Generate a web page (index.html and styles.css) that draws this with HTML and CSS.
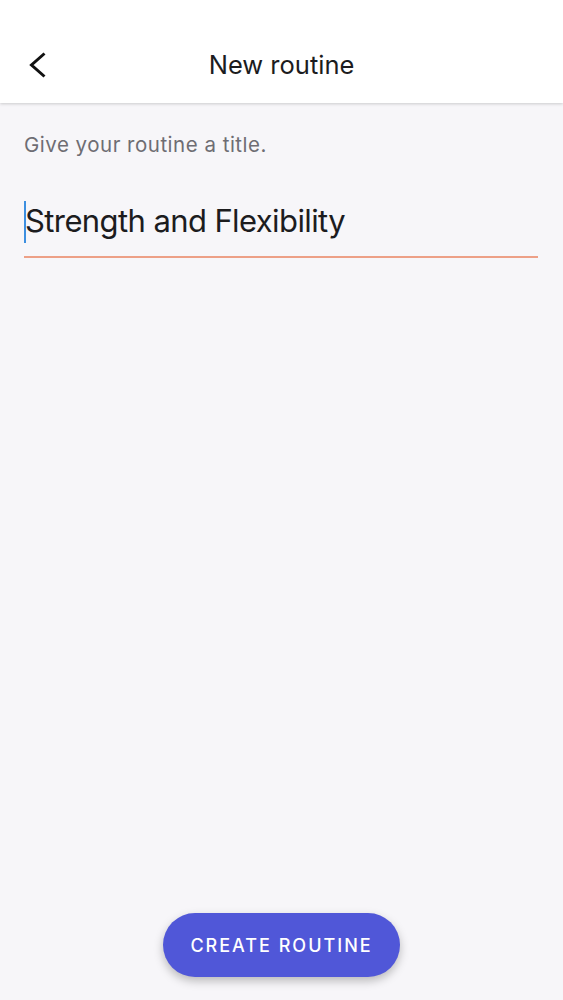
FILE: index.html
```html
<!DOCTYPE html>
<html lang="en">
<head>
<meta charset="utf-8">
<title>New routine</title>
<link rel="stylesheet" href="styles.css">
</head>
<body>
<div class="screen">
  <header class="topbar">
    <button class="back" aria-label="Back">
      <svg width="20" height="30" viewBox="0 0 20 30"><path d="M16.5 3.5 L3.5 15 L16.5 26.5" fill="none" stroke="#111" stroke-width="3" stroke-linecap="butt" stroke-linejoin="miter"/></svg>
    </button>
    <h1 class="title">New routine</h1>
    <span class="spacer"></span>
  </header>
  <main class="content">
    <p class="hint">Give your routine a title.</p>
    <div class="field">
      <span class="caret"></span><span class="value">Strength and Flexibility</span>
    </div>
  </main>
  <footer class="actions">
    <button class="cta">CREATE ROUTINE</button>
  </footer>
</div>
</body>
</html>
```
FILE: styles.css
```css
* { box-sizing: border-box; }
html, body { margin: 0; padding: 0; }
body {
  font-family: Inter, "Noto Sans", sans-serif;
  background: #f7f6f9;
  color: #1c1c1e;
}
.screen {
  height: 1000px;
  display: flex;
  flex-direction: column;
}
.topbar {
  height: 103px;
  background: #fff;
  display: flex;
  align-items: center;
  padding: 49px 0 22px 0;
  box-shadow: 0 1px 3px rgba(0,0,0,0.18);
  position: relative;
  z-index: 1;
}
.back {
  width: 76px;
  height: 32px;
  padding: 0 0 0 28px;
  border: 0;
  background: none;
  display: flex;
  align-items: center;
}
.title {
  flex: 1;
  margin: 0;
  text-align: center;
  font-size: 25.5px;
  font-weight: 400;
  line-height: 32px;
  color: #1c1c1e;
}
.spacer { width: 76px; }
.content {
  flex: 1;
  padding: 30px 25px 0 24px;
}
.hint {
  margin: 0;
  font-size: 20.5px;
  line-height: 24px;
  letter-spacing: 0.5px;
  color: #6e6d73;
}
.field {
  margin-top: 44px;
  height: 57px;
  border-bottom: 2px solid #eda087;
  display: flex;
  align-items: flex-start;
}
.caret {
  width: 2px;
  height: 42px;
  background: #3d8fe0;
}
.value {
  font-size: 31px;
  line-height: 40px;
  letter-spacing: -0.6px;
  color: #1c1c1e;
  margin-left: -1px;
}
.actions {
  display: flex;
  justify-content: center;
  padding-bottom: 23px;
}
.cta {
  width: 237px;
  height: 64px;
  border: 0;
  border-radius: 32px;
  background: #5057d8;
  color: #fff;
  font-family: Inter, "Noto Sans", sans-serif;
  font-size: 18px;
  font-weight: 500;
  letter-spacing: 2px;
  padding: 0;
  box-shadow: 0 4px 10px rgba(0,0,0,0.25);
}
```
